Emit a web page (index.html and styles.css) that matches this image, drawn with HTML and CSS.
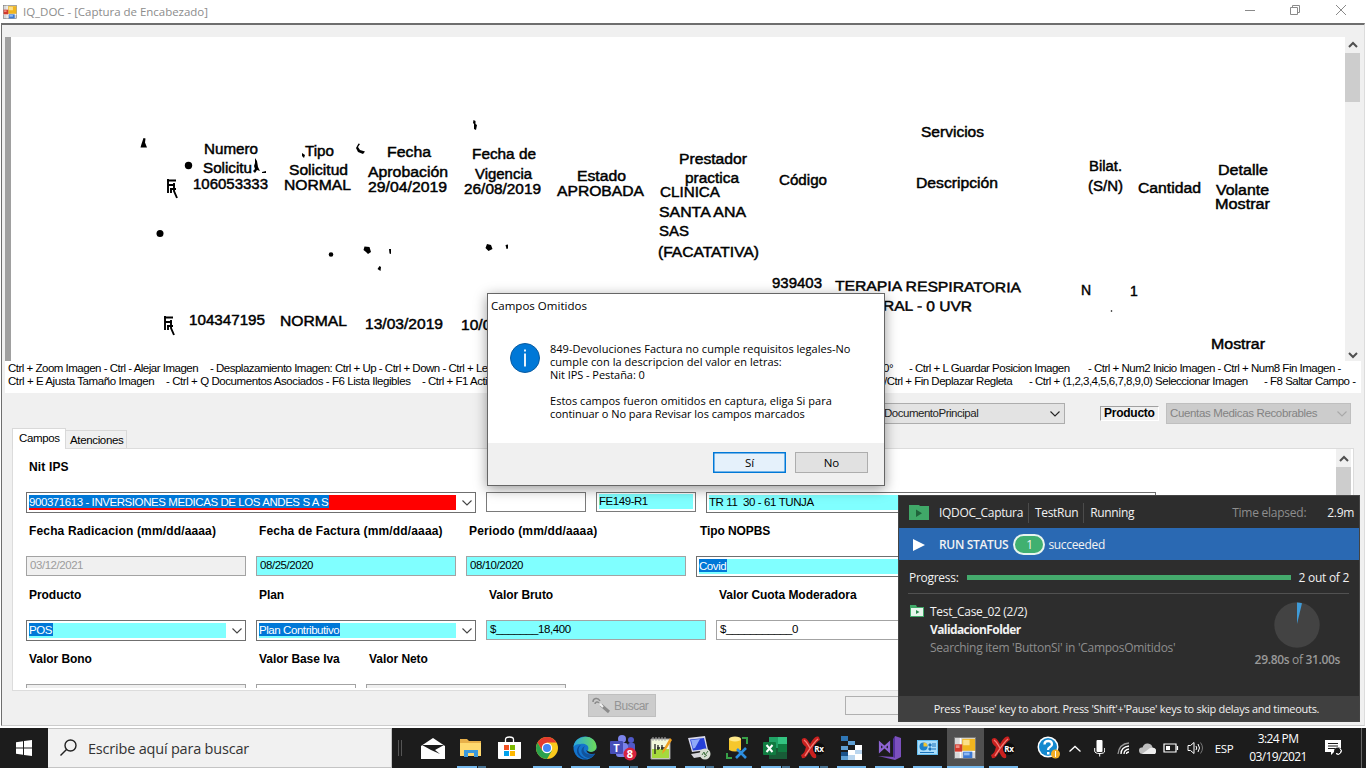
FILE: index.html
```html
<!DOCTYPE html>
<html lang="es">
<head>
<meta charset="utf-8">
<title>IQ_DOC - [Captura de Encabezado]</title>
<link rel="stylesheet" href="styles.css">
</head>
<body>
<svg class="defs" aria-hidden="true">
  <symbol id="chev" viewBox="0 0 12 8"><path d="M1.500 1.500 6 6l4.500-4.500" fill="none" stroke="currentColor" stroke-width="1.100"/></symbol>
  <symbol id="arrow-up" viewBox="0 0 10 8"><path d="M1 6 5 2l4 4" fill="none" stroke="#505050" stroke-width="2"/></symbol>
  <symbol id="form" viewBox="0 0 24 24">
    <rect x=".5" y=".5" width="23" height="23" fill="#d8d8d8" stroke="#777"/>
    <path d="M7 1v22M1 16h22" stroke="#fff" stroke-width="1.500"/>
    <rect x="9" y="2" width="14" height="13" fill="#f0b51e"/><rect x="10" y="3" width="7" height="6" fill="#fbe08a"/>
    <rect x="1" y="8" width="8" height="8" fill="#d23a2c"/><rect x="2" y="9" width="4" height="3" fill="#ee8b80"/>
    <rect x="10" y="16" width="10" height="7" fill="#3d79d2"/><rect x="11" y="17" width="6" height="3" fill="#8fb9f2"/>
  </symbol>
  <symbol id="rx" viewBox="0 0 26 24">
    <path d="M2 3c4-3 6 2 8 5 3-4 5-9 9-7l1 3c-4 2-5 5-7 8 2 4 4 7 3 10-4 1-5-3-7-6-2 4-4 7-7 6l-1-3c4-2 4-5 5-8C3 9 1 6 2 3z" fill="#c9201f"/>
    <path d="M4 4c3 2 4 5 6 8M18 3c-4 3-9 11-13 17" stroke="#f08078" stroke-width="1.300" fill="none"/>
    <circle cx="19" cy="13" r="6" fill="#0c0c0c"/>
  </symbol>
</svg>

<div class="window">
  <header class="titlebar">
    <svg class="app-icon" width="14" height="14"><use href="#form"/></svg>
    <span class="title">IQ_DOC - [Captura de Encabezado]</span>
    <svg class="win-buttons" width="104" height="14" viewBox="0 0 104 14" fill="none" stroke="#8a8a8a">
      <path d="M1 7.500h10M46.500 4.500h7v7h-7zM48.500 4.500v-2h7v7h-2M92 2l10 10M102 2 92 12"/>
    </svg>
  </header>

  <main class="client">
    <section class="viewer">
      <svg class="scan" viewBox="11 37 1334 324" width="1334" height="324">
        <g class="scan-text">
          <text x="204" y="154" textLength="54" lengthAdjust="spacingAndGlyphs">Numero</text>
          <text x="203" y="173" textLength="49" lengthAdjust="spacingAndGlyphs">Solicitu</text>
          <text x="193" y="188.500" textLength="75" lengthAdjust="spacingAndGlyphs">106053333</text>
          <text x="305" y="155.500" textLength="29" lengthAdjust="spacingAndGlyphs">Tipo</text>
          <text x="289" y="175" textLength="59" lengthAdjust="spacingAndGlyphs">Solicitud</text>
          <text x="284" y="190" textLength="67" lengthAdjust="spacingAndGlyphs">NORMAL</text>
          <text x="387" y="157" textLength="44" lengthAdjust="spacingAndGlyphs">Fecha</text>
          <text x="368" y="177" textLength="80" lengthAdjust="spacingAndGlyphs">Aprobación</text>
          <text x="368" y="191.500" textLength="79" lengthAdjust="spacingAndGlyphs">29/04/2019</text>
          <text x="472" y="159" textLength="64" lengthAdjust="spacingAndGlyphs">Fecha de</text>
          <text x="475" y="179" textLength="57" lengthAdjust="spacingAndGlyphs">Vigencia</text>
          <text x="464" y="193.500" textLength="77" lengthAdjust="spacingAndGlyphs">26/08/2019</text>
          <text x="577" y="181" textLength="49" lengthAdjust="spacingAndGlyphs">Estado</text>
          <text x="557" y="195.500" textLength="87" lengthAdjust="spacingAndGlyphs">APROBADA</text>
          <text x="679" y="163.500" textLength="68" lengthAdjust="spacingAndGlyphs">Prestador</text>
          <text x="685" y="183" textLength="54" lengthAdjust="spacingAndGlyphs">practica</text>
          <text x="660" y="197" textLength="60" lengthAdjust="spacingAndGlyphs">CLINICA</text>
          <text x="659" y="217" textLength="87" lengthAdjust="spacingAndGlyphs">SANTA ANA</text>
          <text x="659" y="236" textLength="30" lengthAdjust="spacingAndGlyphs">SAS</text>
          <text x="658" y="256.500" textLength="101" lengthAdjust="spacingAndGlyphs">(FACATATIVA)</text>
          <text x="779" y="185" textLength="48" lengthAdjust="spacingAndGlyphs">Código</text>
          <text x="921" y="136.500" textLength="63" lengthAdjust="spacingAndGlyphs">Servicios</text>
          <text x="916" y="188" textLength="82" lengthAdjust="spacingAndGlyphs">Descripción</text>
          <text x="1089" y="171" textLength="33" lengthAdjust="spacingAndGlyphs">Bilat.</text>
          <text x="1088" y="191" textLength="35" lengthAdjust="spacingAndGlyphs">(S/N)</text>
          <text x="1138" y="192.500" textLength="63" lengthAdjust="spacingAndGlyphs">Cantidad</text>
          <text x="1218" y="174.500" textLength="50" lengthAdjust="spacingAndGlyphs">Detalle</text>
          <text x="1216" y="194.500" textLength="53" lengthAdjust="spacingAndGlyphs">Volante</text>
          <text x="1215" y="209" textLength="55" lengthAdjust="spacingAndGlyphs">Mostrar</text>
          <text x="772" y="288" textLength="50" lengthAdjust="spacingAndGlyphs">939403</text>
          <text x="835" y="290.500" textLength="186" lengthAdjust="spacingAndGlyphs" transform="rotate(.6 835 290)">TERAPIA RESPIRATORIA</text>
          <text x="871" y="310.500" textLength="101" lengthAdjust="spacingAndGlyphs" transform="rotate(.4 871 310)">ORAL - 0 UVR</text>
          <text x="1081" y="295">N</text>
          <text x="1130" y="296">1</text>
          <text x="189" y="324.500" textLength="76" lengthAdjust="spacingAndGlyphs">104347195</text>
          <text x="280" y="326" textLength="67" lengthAdjust="spacingAndGlyphs">NORMAL</text>
          <text x="365" y="328.500" textLength="78" lengthAdjust="spacingAndGlyphs">13/03/2019</text>
          <text x="461" y="329.500" textLength="78" lengthAdjust="spacingAndGlyphs">10/06/2019</text>
          <text x="1211" y="348.500" textLength="54" lengthAdjust="spacingAndGlyphs">Mostrar</text>
        </g>
        <g fill="#000">
          <path d="m143.500 138 2 .5-.5 4 2 5h-6.500l1-3.500z"/>
          <circle cx="188.500" cy="165.500" r="3.700"/>
          <path d="m255 158 2 3 1 6 2 4-3-1-2 3-2-2 2-2-1-3 1-3zM262 172l4-1v2h-4z"/>
          <path d="m302 153 3 2-1 3-2-2zM358.500 143.500l1.500.5-2 3 2 3 5 1.500-2 2.500-5-2-2-4z"/>
          <path d="m473.500 120 2 1v3l1.500 1-1 5-2-1v-5l-1-1z"/>
          <circle cx="160" cy="233.500" r="3.500"/><circle cx="331" cy="254.500" r="2.300"/>
          <path d="m364.500 246.500 5 .5 1.500 5-3 2-2-2-2.500-2zM389 249h2v5l-1.500-.5zM379.500 266l1.500 1-.5 4-3-2zM487 244l4 1 1.500 4-4 2-3-3zM505.500 245l2.500-.5v4l-1.500.5z"/>
          <circle cx="1111.500" cy="311" r=".8"/>
        </g>
        <g fill="none" stroke="#000" stroke-width="1.900">
          <path id="mark" d="M167 180.500h9M168 179v14M168 185h7M170 189h6M174 183v8l3 7M171 188v5"/>
          <use href="#mark" x="-3" y="137"/>
        </g>
      </svg>
      <div class="scroll">
        <svg class="scroll-arrow" width="10" height="8"><use href="#arrow-up"/></svg>
        <div class="scroll-thumb"></div>
        <svg class="scroll-arrow down" width="10" height="8"><use href="#arrow-up"/></svg>
      </div>
    </section>

    <section class="hints">
      <div class="hint-line">
        <span class="h1a">Ctrl + Zoom Imagen - Ctrl - Alejar Imagen</span>
        <span class="h1b">- Desplazamiento Imagen: Ctrl + Up - Ctrl + Down - Ctrl + Left</span>
        <span class="h1c">0°</span>
        <span class="h1d">- Ctrl + L Guardar Posicion Imagen</span>
        <span class="h1e">- Ctrl + Num2 Inicio Imagen - Ctrl + Num8 Fin Imagen -</span>
      </div>
      <div class="hint-line">
        <span class="h2a">Ctrl + E Ajusta Tamaño Imagen</span>
        <span class="h2b">- Ctrl + Q Documentos Asociados - F6 Lista Ilegibles</span>
        <span class="h2c">- Ctrl + F1 Activar</span>
        <span class="h2d">/Ctrl + Fin Deplazar Regleta</span>
        <span class="h2e">- Ctrl + (1,2,3,4,5,6,7,8,9,0) Seleccionar Imagen</span>
        <span class="h2f">- F8 Saltar Campo -</span>
      </div>
    </section>

    <section class="selectors">
      <div class="select doc-type"><span>DocumentoPrincipal</span><svg width="12" height="8"><use href="#chev"/></svg></div>
      <label class="product-label">Producto</label>
      <div class="select product disabled"><span>Cuentas Medicas Recobrables</span><svg width="12" height="8"><use href="#chev"/></svg></div>
    </section>

    <nav class="tabs">
      <div class="tab active">Campos</div>
      <div class="tab">Atenciones</div>
    </nav>

    <section class="panel">
      <div class="form">
        <div class="row">
          <div class="cell w450"><label>Nit IPS</label><div class="combo"><div class="fill red"><mark>900371613 - INVERSIONES MEDICAS DE LOS ANDES S A S</mark></div><svg width="12" height="8"><use href="#chev"/></svg></div></div>
          <div class="cell w100"><label></label><div class="input dark"></div></div>
          <div class="cell w100"><label></label><div class="input dark inset"><div class="fill">FE149-R1</div></div></div>
          <div class="cell w450"><label></label><div class="combo"><div class="fill address">TR 11&nbsp; 30 - 61 TUNJA</div></div></div>
        </div>
        <div class="row">
          <div class="cell w220"><label>Fecha Radicacion (mm/dd/aaaa)</label><div class="input off">03/12/2021</div></div>
          <div class="cell w200"><label>Fecha de Factura (mm/dd/aaaa)</label><div class="input cyan">08/25/2020</div></div>
          <div class="cell w220"><label>Periodo (mm/dd/aaaa)</label><div class="input cyan">08/10/2020</div></div>
          <div class="cell w450"><label class="nopbs">Tipo NOPBS</label><div class="combo"><div class="fill"><mark>Covid</mark></div></div></div>
        </div>
        <div class="row tight">
          <div class="cell w220"><label>Producto</label><div class="combo"><div class="fill"><mark>POS</mark></div><svg width="12" height="8"><use href="#chev"/></svg></div></div>
          <div class="cell w220"><label>Plan</label><div class="combo"><div class="fill"><mark>Plan Contributivo</mark></div><svg width="12" height="8"><use href="#chev"/></svg></div></div>
          <div class="cell w220"><label>Valor Bruto</label><div class="input cyan money">$_______18,400</div></div>
          <div class="cell w220"><label>Valor Cuota Moderadora</label><div class="input money">$___________0</div></div>
        </div>
        <div class="row tight">
          <div class="cell w220"><label>Valor Bono</label><div class="input off"></div></div>
          <div class="cell w100"><label>Valor Base Iva</label><div class="input"></div></div>
          <div class="cell w200"><label>Valor Neto</label><div class="input off"></div></div>
        </div>
      </div>
      <div class="scroll">
        <svg class="scroll-arrow lower" width="10" height="8"><use href="#arrow-up"/></svg>
        <div class="scroll-thumb tall"></div>
      </div>
    </section>

    <footer class="actions">
      <button class="search-btn">
        <svg width="19" height="17" viewBox="0 0 19 17" fill="none" stroke="#8b8b8b"><path d="M1 5c0-4 5-5 7-1M3 7c0-2 3-3 4-1" stroke-width="1.500"/><path d="m9 8 8 7" stroke-width="3"/><path d="m8 7 3 3" stroke="#f2f2f2" stroke-width="2"/></svg>
        <span>Buscar</span>
      </button>
      <div class="progress-box"></div>
    </footer>
  </main>
</div>

<footer class="taskbar">
  <div class="start"><svg width="16" height="16" viewBox="0 0 16 16" fill="#fff"><path d="M0 2.200 7 1.200v6.300H0zM8 1l8-1v7.500H8zM0 8.500h7v6.300L0 13.800zM8 8.500h8V16l-8-1z"/></svg></div>
  <div class="searchbox"><svg width="17" height="18" viewBox="0 0 17 18" fill="none" stroke="#222" stroke-width="1.400"><circle cx="10.500" cy="6.500" r="5.500"/><path d="m6.500 10.500-6 6"/></svg><span>Escribe aquí para buscar</span></div>
  <div class="grip"></div>
  <div class="apps">
    <div class="app"><svg width="24" height="21" viewBox="0 0 24 21"><path d="M0 8 12 0l12 8v13H0z" fill="#fff"/><path d="M1 7h22l-9 5 5 4-9-4z" fill="#1c1c1c"/></svg></div>
    <div class="app run multi"><svg width="22" height="20" viewBox="0 0 22 20"><path d="M0 1h7l2 2h12v15H0z" fill="#e8b04a"/><path d="M0 5h21v13H0z" fill="#ffd96f"/><path d="M4 19v-7h14v7h-4v-4H8v4z" fill="#3a99dc"/></svg></div>
    <div class="app"><svg width="23" height="24" viewBox="0 0 23 24"><path d="M7.500 7V3.500q0-2.500 4-2.500t4 2.500V7" fill="none" stroke="#fff" stroke-width="1.300"/><path d="M0 6h23v16q0 1-1 1H1q-1 0-1-1z" fill="#fff"/><path d="M6 9h5v5H6z" fill="#f05022"/><path d="M12 9h5v5h-5z" fill="#7db901"/><path d="M6 15h5v5H6z" fill="#00a2ed"/><path d="M12 15h5v5h-5z" fill="#ffb800"/></svg></div>
    <div class="app run"><svg width="22" height="22" viewBox="0 0 22 22"><circle cx="11" cy="11" r="11" fill="#f9c91c"/><path d="M1.500 5.500A11 11 0 0 1 20.500 5.500H11L6.200 13.700z" fill="#e33b2e"/><path d="M1.500 5.500A11 11 0 0 0 11 22l4.800-8.200H6.200z" fill="#2ba24c"/><circle cx="11" cy="11" r="5.200" fill="#fff"/><circle cx="11" cy="11" r="4" fill="#4285f4"/></svg></div>
    <div class="app run"><svg width="24" height="24" viewBox="0 0 24 24"><defs><linearGradient id="eg" x2="1"><stop stop-color="#2aa8df"/><stop offset="1" stop-color="#6ddb57"/></linearGradient></defs><circle cx="12" cy="12" r="11.500" fill="#1474cc"/><path d="M.5 11C2-2 23-3 23.500 11c0 5-6 6-9 4 3-5-2-8-7-7-4 0-6 1-7 3z" fill="url(#eg)"/><path d="M8 9c-6 5 0 14 8 14-6 1-12-3-12-8 0-3 2-6 4-6z" fill="#0c4a94"/><path d="M12 10c-4 5 1 10 10 8-1 2-4 4-7 4-7-2-9-9-3-12z" fill="#12539b"/><path d="M14.500 15c3 2 8 1 9-3v5c-4 2-10 1-10-3z" fill="#1c1c1c"/></svg></div>
    <div class="app run multi"><svg width="28" height="26" viewBox="0 0 28 26"><circle cx="13" cy="4" r="4" fill="#7b83eb"/><circle cx="22" cy="5" r="3" fill="#5059c9"/><rect x="7" y="8" width="12" height="14" rx="3" fill="#7b83eb"/><rect x="19" y="8" width="7" height="10" rx="2" fill="#5059c9"/><rect x="1" y="6" width="13" height="13" rx="1" fill="#464eb8"/><text x="7.500" y="16.500" class="ico-text">T</text><circle cx="21" cy="19" r="6.500" fill="#d6233f"/><text x="21" y="23" class="ico-text">8</text></svg></div>
    <div class="app run"><svg width="22" height="24" viewBox="0 0 22 24"><path d="M1 3h19v20H1z" fill="#f3f7dc" stroke="#999"/><path d="M2 13h17v9H2z" fill="#a5d93c"/><path d="M3 1v4M6 1v4M9 1v4M12 1v4M15 1v4" stroke="#aaa"/><path d="M5 8v10M8 9v5M7 12h3M12 9v5M11 12h4" stroke="#222" stroke-width="1.300"/><path d="m20 2-7 12-1 4 3-3 7-11z" fill="#f0a020"/></svg></div>
    <div class="app run multi"><svg width="24" height="24" viewBox="0 0 24 24"><path d="m1 2 17-2 3 14-16 2z" fill="#d9d9ea"/><path d="m3 3.500 14-1.500 2.500 11L6 14.500z" fill="#2640d8"/><path d="m4 4 9-1-5 9-2 .5z" fill="#8fa9f8"/><path d="m4 18 12-2 3 4-12 2z" fill="#d5d5dc"/><circle cx="18" cy="18" r="5.500" fill="#d7ded4"/><path d="m15 19 2-3 1 3 3-4M17 21l3-2" stroke="#447544" fill="none"/></svg></div>
    <div class="app run"><svg width="24" height="24" viewBox="0 0 24 24"><path d="M4 3v11q6 3 12 0V3z" fill="#f6c72c"/><ellipse cx="10" cy="3" rx="6" ry="2.500" fill="#ffe98a"/><path d="M2 17v5h5M17 2h5v6" stroke="#37a048" stroke-width="2" fill="none"/><path d="m12 13 9 9M21 12 11 22" stroke="#2d8ee0" stroke-width="2.600"/></svg></div>
    <div class="app run multi"><svg width="24" height="22" viewBox="0 0 24 22"><path d="M6 0h18v22H6z" fill="#21a366"/><path d="M15 0h9v7h-9z" fill="#33c481"/><path d="M6 11h18v11H6z" fill="#185c37"/><path d="M15 7h9v8h-9z" fill="#107c41"/><rect y="5" width="13" height="13" rx="1" fill="#107c41"/><path d="m3.500 8 6 7M9.500 8l-6 7" stroke="#fff" stroke-width="2"/></svg></div>
    <div class="app run multi"><svg width="26" height="24" viewBox="0 0 26 24"><use href="#rx" width="26" height="24"/><text x="19" y="16" class="rx-text">Rx</text></svg></div>
    <div class="app run"><svg width="21" height="24" viewBox="0 0 21 24"><path d="M0 0h7v5H0z" fill="#2f76b5"/><path d="M7 5h7v4H7zM0 10h7v4H0zM0 20h7v4H0z" fill="#5f9fd3"/><path d="M14 9h7v5h-7zM7 14h7v5H7zM14 18h7v6h-7z" fill="#fff"/><path d="M14 14h7v4h-7zM7 19h7v5H7z" fill="#b9d5ee"/><path d="M0 16h7v4H0z" fill="#1c5289"/></svg></div>
    <div class="app run"><svg width="25" height="24" viewBox="0 0 25 24"><path d="m18 0 6 2v19l-6 3-17-4 17 1z" fill="#7b50bd"/><path d="M18 0v22l-2-1V3z" fill="#52329a"/><path d="m3 7 9 8V7l-9 8z" fill="none" stroke="#8d63d2" stroke-width="2.200"/></svg></div>
    <div class="app run"><svg width="21" height="16" viewBox="0 0 21 16"><path d="M0 0h21v15H0z" fill="#63bdf0"/><path d="M1 1h19v13H1z" fill="#a9dcfa"/><circle cx="6.500" cy="6.500" r="4" fill="#1d80ca"/><path d="M6.500 6.500v-4a4 4 0 0 1 4 4z" fill="#f2c430"/><path d="M12 4h2v2h-2zM12 8h2v2h-2zM15 4h4M15 6h4M15 9h4M3 12.500h14" fill="#1b73bb" stroke="#1b73bb"/></svg></div>
    <div class="app run current"><svg width="22" height="22"><use href="#form"/></svg></div>
    <div class="app run"><svg width="26" height="24" viewBox="0 0 26 24"><use href="#rx" width="26" height="24"/><text x="19" y="16" class="rx-text">Rx</text></svg></div>
  </div>
  <div class="tray">
    <div class="t-help"><svg width="24" height="24" viewBox="0 0 24 24"><circle cx="11" cy="11" r="10.500" fill="#fff"/><circle cx="11" cy="11" r="9" fill="#1489cf"/><path d="M7.500 8.500q0-3.500 3.700-3.500T15 8.300q0 1.700-2 2.700t-2 3" fill="none" stroke="#fff" stroke-width="2.300"/><path d="M10 16h2.500v2.500H10z" fill="#fff"/><circle cx="18.500" cy="18" r="4.500" fill="#f2ae27"/><path d="M18.500 15v6" stroke="#fff"/></svg></div>
    <div class="t-chev"><svg width="12" height="7" viewBox="0 0 12 7"><path d="m.5 6.500 5.500-5 5.500 5" fill="none" stroke="#fff" stroke-width="1.300"/></svg></div>
    <div class="t-mic"><svg width="11" height="17" viewBox="0 0 11 17"><rect x="2.500" width="6" height="12" rx="1" fill="#fff"/><path d="M.7 8v3q0 2.500 5 2.500t5-2.500V8M5.700 13v3.500" fill="none" stroke="#fff"/></svg></div>
    <div class="t-wifi"><svg width="14" height="13" viewBox="0 0 14 13" fill="none" stroke-width="1.300"><path d="M1 12Q2 2 12 1" stroke="#999"/><path d="M4 12q0-7 8-8M7 12q0-4 5-5M9.500 12q0-2 2.500-2" stroke="#fff"/></svg></div>
    <div class="t-cloud"><svg width="17" height="11" viewBox="0 0 17 11"><path d="M4 11Q0 11 0 7.500T3.500 4.500Q5 0 9 .5t4.500 4Q17 5 17 8t-3 3z" fill="#bdbdbd"/><path d="m3 11 8-6q6-1 6 3t-3 3z" fill="#eee"/></svg></div>
    <div class="t-batt"><svg width="16" height="10" viewBox="0 0 16 10"><path d="M1 1h12v8H1zM14.500 3v4" fill="none" stroke="#fff" stroke-width="1.200"/><path d="M3 3h4v4H3z" fill="#fff"/></svg></div>
    <div class="t-vol"><svg width="17" height="14" viewBox="0 0 17 14" fill="none" stroke="#fff"><path d="M1 4.500h2.500L7 1.500v11l-3.500-3H1z"/><path d="M9 5q1.500 2 0 4M11 3q3 4 0 8"/><path d="M13.500 1.500q4 5.500 0 11" stroke="#777"/></svg></div>
    <div class="t-lang">ESP</div>
    <div class="t-clock"><span class="time">3:24 PM</span><span>03/19/2021</span></div>
    <div class="t-note"><svg width="17" height="16" viewBox="0 0 17 16"><path d="M0 0h16v12H9l-3 3v-3H0z" fill="#fff"/><path d="M3 3.500h10M3 6h10M3 8.500h7" stroke="#1c1c1c"/><circle cx="13" cy="11.500" r="4" fill="#1c1c1c"/><path d="M11 13.500a3 3 0 0 0 4-5 3 3 0 0 1-4 5z" fill="#fff" stroke="#fff"/></svg></div>
  </div>
</footer>

<div class="dialog" role="dialog">
  <div class="dialog-title">Campos Omitidos</div>
  <div class="dialog-body">
    <svg width="30" height="30" viewBox="0 0 30 30"><circle cx="15" cy="15" r="14.500" fill="#0078d7" stroke="#0a5ba0"/><path d="M15 10.500v13M15 6.500v2" stroke="#fff" stroke-width="1.800"/></svg>
    <div class="dialog-text">
      <p class="d1">849-Devoluciones Factura no cumple requisitos legales-No</p>
      <p class="d2">cumple con la descripcion del valor en letras:</p>
      <p class="d3">Nit IPS - Pestaña: 0</p>
      <p class="d4 gap">Estos campos fueron omitidos en captura, eliga Si para</p>
      <p class="d5">continuar o No para Revisar los campos marcados</p>
    </div>
  </div>
  <div class="dialog-footer"><button class="btn primary">Sí</button><button class="btn">No</button></div>
</div>

<aside class="toast">
  <div class="toast-head">
    <svg width="20" height="17" viewBox="0 0 20 17"><path d="M0 1h10l1 1h9v14H0z" fill="#40a868"/><path d="m7 5.500 6 3.700-6 3.800z" fill="#20633b"/></svg>
    <span class="th-a">IQDOC_Captura</span><i></i><span class="th-b">TestRun</span><i></i><span class="th-c">Running</span>
    <span class="elapsed">Time elapsed:</span><span class="th-t">2.9m</span>
  </div>
  <div class="toast-status">
    <svg width="12" height="12" viewBox="0 0 12 12"><path d="m0 0 12 6-12 6z" fill="#fff"/></svg>
    <b>RUN STATUS</b><span class="pill">1</span><span class="succ">succeeded</span>
  </div>
  <div class="toast-progress"><span class="pr-a">Progress:</span><div class="bar"></div><span class="pr-b">2 out of 2</span></div>
  <div class="toast-case">
    <svg class="case-icon" width="14" height="12" viewBox="0 0 14 12"><path d="M0 0h6l1 2h7v10H0z" fill="#40a868"/><path d="M1 3h12v8H1z" fill="#e7f5ec"/><path d="m6 5 3.500 2L6 9z" fill="#2c8a4e"/></svg>
    <div class="case-text">
      <span class="case-name">Test_Case_02 (2/2)</span>
      <b>ValidacionFolder</b>
      <span class="muted">Searching item 'ButtonSi' in 'CamposOmitidos'</span>
    </div>
    <div class="timer">
      <svg width="46" height="46" viewBox="0 0 46 46"><circle cx="23" cy="23" r="22.700" fill="#434343"/><path d="M23 22V.5q3 0 5 .8z" fill="#3f9bd8"/></svg>
      <span><b>29.80s</b> of <b>31.00s</b></span>
    </div>
  </div>
  <div class="toast-foot">Press 'Pause' key to abort. Press 'Shift'+'Pause' keys to skip delays and timeouts.</div>
</aside>
</body>
</html>
```
FILE: styles.css
```css
* { box-sizing: border-box; }
body {
  margin: 0; width: 1366px; height: 768px; overflow: hidden; position: relative;
  display: flex; flex-direction: column; background: #fff; color: #000;
  font: 11.5px/13px "Liberation Sans", Arial, sans-serif; letter-spacing: -.5px;
}
p { margin: 0; }
svg { display: block; flex: none; }
span, label, mark, p, b { white-space: nowrap; }
.defs { position: absolute; width: 0; height: 0; }
.rx-text { font: bold 8px "Open Sans", sans-serif; fill: #fff; text-anchor: middle; letter-spacing: -.3px; }
.ico-text { font: 700 11px "Open Sans", sans-serif; fill: #fff; text-anchor: middle; letter-spacing: 0; }

/* window frame */
.window { height: 728px; display: flex; flex-direction: column; }
.titlebar { height: 23px; display: flex; align-items: center; padding-left: 3px; background: #fff; }
.title { margin-left: 6px; color: #8c8c8c; font: 11.5px/16px "Open Sans", sans-serif; letter-spacing: -.03px; }
.win-buttons { margin: 0 18px 3px auto; }
.client {
  height: 703px; margin: 0 1px; border-top: 2px solid #6e6e6e; border-left: 1px solid #6e6e6e;
  border-right: 1px solid #dcdcdc; border-bottom: 1px solid #ccc; padding: 12px 4px 0 3px; background: #f0f0f0;
}

/* scanned page viewer */
.viewer { display: flex; height: 324px; width: 1355px; border-left: 6px solid #a0a0a0; background: #fff; }
.scan-text { font: 14px "Liberation Sans", sans-serif; fill: #000; stroke: #000; stroke-width: .45px; letter-spacing: 0; }
.scroll { width: 15px; background: #f0f0f0; display: flex; flex-direction: column; align-items: center; }
.scroll-arrow { margin: 4px 0; }
.scroll-arrow.lower { margin: 6px 0 4px; }
.scroll-arrow.down { margin-top: auto; margin-bottom: 2px; transform: scaleY(-1); }
.scroll-thumb { width: 15px; height: 49px; background: #cdcdcd; }
.scroll-thumb.tall { height: 170px; }

/* shortcut hints */
.hints { height: 32px; width: 1356px; background: #fff; padding: 1px 0 0 3px; }
.hint-line { display: flex; height: 13px; }
.hint-line span { flex: none; }
.h1a { width: 202px; } .h1b { width: 673px; } .h1c { width: 26px; } .h1d { width: 179px; }
.h2a { width: 158px; } .h2b { width: 256px; } .h2c { width: 462px; } .h2d { width: 145px; } .h2e { width: 235px; }
.hint-line .h2a, .hint-line .h2b { letter-spacing: -.43px; }

/* document selectors */
.selectors { height: 35px; display: flex; padding: 10px 0 0 715px; }
.select { height: 21px; border: 1px solid #adadad; background: #e3e3e3; display: flex; align-items: center; justify-content: space-between; padding: 0 2px 0 3px; }
.select.doc-type { width: 345px; padding-left: 163px; padding-right: 3px; color: #222; letter-spacing: -.48px; }
.select.product { width: 185px; margin-left: 7px; }
.select.disabled { background: #ccc; border-color: #bfbfbf; color: #838383; letter-spacing: -.35px; }
.select.disabled svg { color: #a9a9a9; }
.product-label { width: 59px; height: 15px; margin: 3px 0 0 35px; border: 1px solid #fff; border-top-color: #a0a0a0; border-left-color: #a0a0a0; padding-left: 3px; font-weight: 700; font-size: 12px; line-height: 13px; letter-spacing: -.25px; }

/* tabs and form */
.tabs { display: flex; align-items: flex-end; padding-left: 7px; height: 20px; }
.tab { height: 18px; width: 61px; border: 1px solid #d9d9d9; border-bottom: 0; border-left: 0; padding: 3px 0 0 4px; letter-spacing: -.35px; }
.tab.active { height: 21px; margin-bottom: -1px; width: 54px; background: #fff; border-left: 1px solid #d9d9d9; padding: 3px 0 0 6px; z-index: 1; }
.panel { margin-left: 7px; width: 1342px; height: 243px; border: 1px solid #dcdcdc; background: #fff; display: flex; overflow: hidden; padding-right: 2px; }
.form { flex: 1; overflow: hidden; height: 239px; }
.row { height: 64px; display: flex; gap: 10px; padding-left: 13px; }
.cell { flex: none; }
.w100 { width: 100px; } .w200 { width: 200px; } .w220 { width: 220px; } .w450 { width: 450px; }
.cell label { display: block; height: 43px; padding: 10px 0 0 3px; font: 700 12px/16px "Liberation Sans", sans-serif; letter-spacing: .15px; }
.tight .cell label { letter-spacing: -.05px; }
.cell .nopbs { padding-left: 4px; letter-spacing: -.1px; }
.input { height: 20px; border: 1px solid #a3a3a3; padding: 2px 3px; background: #fff; letter-spacing: -.45px; }
.input.dark { border-color: #7a7a7a; }
.input.inset { padding: 1px 2px; }
.input.cyan { background: #80ffff; }
.input.off { background: #f0f0f0; color: #9c9c9c; }
.input.money { letter-spacing: -.4px; }
.combo { height: 21px; border: 1px solid #6f6f6f; background: #fff; padding: 2px; display: flex; align-items: center; gap: 5px; }
.combo svg { color: #444; }
.fill { flex: 1; height: 15px; background: #80ffff; line-height: 14px; }
.fill.red { background: #f00; }
.fill.address { letter-spacing: -.4px; }
mark { background: #0078d7; color: #fff; display: inline-block; height: 13px; line-height: 14px; padding-right: 1px; letter-spacing: -.43px; }

/* bottom actions */
.actions { display: flex; }
.search-btn { margin: 3px 0 0 583px; width: 68px; height: 23px; border: 1px solid #bfbfbf; background: #ccc; color: #949494; display: flex; align-items: center; gap: 3px; padding: 0 3px; font: 12px "Liberation Sans", sans-serif; letter-spacing: -.5px; }
.progress-box { margin: 5px 0 0 189px; width: 200px; height: 19px; border: 1px solid #b0b0b0; }

/* taskbar */
.taskbar { height: 40px; display: flex; background: #1c1c1c; color: #fff; }
.start { width: 48px; display: grid; place-items: center; }
.searchbox { width: 344px; background: #f1f1f1; border: 1px solid #c4c4c4; border-left: 0; display: flex; align-items: center; padding-left: 12px; gap: 11px; color: #333; font: 14.5px "Open Sans", sans-serif; letter-spacing: -.2px; }
.grip { width: 4px; height: 16px; margin: 12px 12px 0 6px; border: 1px solid #555; border-width: 0 1px; }
.apps { display: flex; }
.app { width: 38px; height: 40px; display: grid; place-items: center; position: relative; }
.run::after { content: ""; position: absolute; left: 5px; right: 4px; bottom: 0; height: 2px; background: #76b9ed; }
.multi::after { background: linear-gradient(90deg, #76b9ed 20px, #1c1c1c 20px 21px, #4a7595 21px); }
.current { background: linear-gradient(90deg, transparent 1px, #505050 1px); }
.current::after { left: 1px; right: 0; }
.tray { display: flex; align-items: center; margin-left: 14px; width: 326px; border-right: 1px solid #666; }
.tray > div { display: flex; justify-content: center; flex: none; }
.t-help { width: 26px; } .t-chev, .t-wifi { width: 25px; } .t-mic, .t-vol, .t-batt { width: 24px; } .t-cloud { width: 23px; }
.tray .t-lang { width: 34px; font: 11.5px "Open Sans", sans-serif; letter-spacing: -.3px; }
.tray .t-clock { width: 74px; flex-direction: column; align-items: center; font: 12px/18px "Open Sans", sans-serif; letter-spacing: -.6px; padding-bottom: 1px; }
.t-note { width: 36px; }

/* message box */
.dialog { position: absolute; left: 487px; top: 293px; width: 398px; height: 193px; border: 1px solid #666; background: #fff; box-shadow: 0 3px 12px rgba(0, 0, 0, .4); display: flex; flex-direction: column; font: 11px/13px "Open Sans", sans-serif; letter-spacing: .02px; }
.dialog-title { padding: 4px 0 0 3px; height: 25px; font-size: 11.5px; line-height: 16px; }
.dialog-body { flex: 1; display: flex; padding: 24px 0 0 22px; gap: 10px; }
.dialog-text { line-height: 13px; margin-top: -1px; }
.d2 { letter-spacing: .04px; }
.d5 { letter-spacing: -.05px; }
.d3 { letter-spacing: -.05px; }
.gap { margin-top: 13px; }
.dialog-footer { height: 42px; background: #f0f0f0; display: flex; justify-content: flex-end; gap: 9px; padding: 9px 16px 0 0; }
.btn { width: 73px; height: 21px; border: 1px solid #adadad; background: #e1e1e1; padding: 0; font: 11.5px "Open Sans", sans-serif; }
.btn.primary { border: 1px solid #0078d7; box-shadow: inset 0 0 0 .5px #0078d7; background: #e5f1fb; }

/* run status notification */
.toast { position: absolute; left: 898px; top: 495px; width: 462px; height: 227px; border: 1px solid #444; background: #2d2d2d; color: #f2f2f2; font: 12px/16px "Open Sans", sans-serif; letter-spacing: -.33px; display: flex; flex-direction: column; }
.toast-head { height: 32px; display: flex; align-items: center; padding: 1px 5px 0 10px; }
.th-a { margin-left: 10px; }
.toast-head i { width: 1px; height: 20px; background: #4b4b4b; margin: 0 6px 0 5px; }
.elapsed { margin-left: auto; margin-right: 21px; color: #8e8e8e; letter-spacing: -.25px; }
.toast-status { height: 32px; background: #2a69b3; display: flex; align-items: center; padding-left: 14px; padding-top: 1px; font-weight: 400; }
.toast-status b { margin-left: 14px; font-weight: 600; }
.pill { width: 32px; height: 21px; margin: 0 3px 0 5px; border: 2px solid #e8f4ee; border-radius: 11px; background: #40b070; text-align: center; line-height: 17px; }
.toast-progress { height: 34px; margin: 0 10px 0 9px; border-bottom: 1px solid #515151; display: flex; align-items: center; gap: 8px; padding: 2px 0 0 1px; letter-spacing: -.28px; }
.bar { flex: 1; height: 5px; background: #44ab6d; }
.toast-case { height: 102px; display: flex; padding: 0 19px 0 11px; }
.case-icon { margin-top: 11px; }
.case-text { display: flex; flex-direction: column; line-height: 18px; margin: 9px 0 0 6px; letter-spacing: -.31px; }
.case-text b { letter-spacing: -.6px; }
.muted { color: #8e8e8e; letter-spacing: -.28px; }
.timer { margin: 8px 0 0 auto; display: flex; flex-direction: column; align-items: center; gap: 4px; color: #999; }
.timer b { font-weight: 600; }
.toast-foot { flex: 1; background: #404040; text-align: center; line-height: 25px; font-size: 11px; letter-spacing: -.28px; padding-right: 5px; }
```
